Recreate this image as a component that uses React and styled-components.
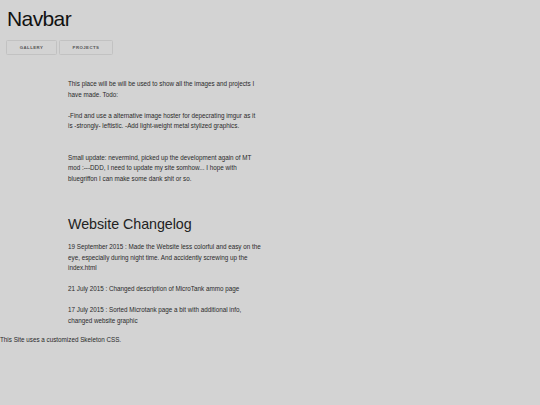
import React from "react";
import styled, { createGlobalStyle } from "styled-components";

const Global = createGlobalStyle`
  html, body { margin: 0; padding: 0; background: #d3d3d3; }
  body { font-family: "Liberation Sans", Arial, sans-serif; color: #222; }
`;

const Page = styled.div`
  display: flex;
  flex-direction: column;
  min-height: 405px;
`;

const Header = styled.header`
  display: flex;
  flex-direction: column;
  padding: 7px 0 0 6px;
`;

const Title = styled.h1`
  margin: 0 0 0 1px;
  font-size: 21px;
  line-height: 23px;
  font-weight: 400;
  letter-spacing: -0.6px;
  color: #111;
`;

const Nav = styled.nav`
  display: flex;
  gap: 2px;
  margin-top: 10px;
`;

const NavButton = styled.a`
  display: flex;
  align-items: center;
  justify-content: center;
  box-sizing: border-box;
  width: ${(p) => p.$w}px;
  height: 15px;
  border: 1px solid #c2c2c2;
  border-radius: 1.5px;
  font-size: 4.3px;
  font-weight: 700;
  letter-spacing: 0.45px;
  text-transform: uppercase;
  color: #555;
`;

const Main = styled.main`
  display: flex;
  flex-direction: column;
  margin: 24px 0 0 68px;
  width: 193.25px;
`;

const Para = styled.p`
  margin: ${(p) => p.$top || 0}px 0 0;
  font-size: 6.3px;
  line-height: 10.5px;
  color: #2a2a2a;
`;

const Heading = styled.h2`
  margin: 32px 0 9px;
  font-size: 14.3px;
  line-height: 17px;
  font-weight: 400;
  letter-spacing: -0.05px;
  color: #222;
`;

const Footer = styled.footer`
  margin-top: 9px;
  font-size: 6.3px;
  line-height: 10.5px;
  color: #2a2a2a;
`;

export default function App() {
  return (
    <Page>
      <Global />
      <Header>
        <Title>Navbar</Title>
        <Nav>
          <NavButton $w={51}>Gallery</NavButton>
          <NavButton $w={54}>Projects</NavButton>
        </Nav>
      </Header>
      <Main>
        <Para>
          This place will be will be used to show all the images and projects I
          have made. Todo:
        </Para>
        <Para $top={10.5}>
          -Find and use a alternative image hoster for depecrating imgur as it is
          -strongly- leftistic. -Add light-weight metal stylized graphics.
        </Para>
        <Para $top={21}>
          Small update: nevermind, picked up the development again of MT mod
          :---DDD, I need to update my site somhow... I hope with bluegriffon I
          can make some dank shit or so.
        </Para>
        <Heading>Website Changelog</Heading>
        <Para>
          19 September 2015 : Made the Website less colorful and easy on the eye,
          especially during night time. And accidently screwing up the index.html
        </Para>
        <Para $top={10.5}>
          21 July 2015 : Changed description of MicroTank ammo page
        </Para>
        <Para $top={10.5}>
          17 July 2015 : Sorted Microtank page a bit with additional info, changed
          website graphic
        </Para>
      </Main>
      <Footer>This Site uses a customized Skeleton CSS.</Footer>
    </Page>
  );
}
